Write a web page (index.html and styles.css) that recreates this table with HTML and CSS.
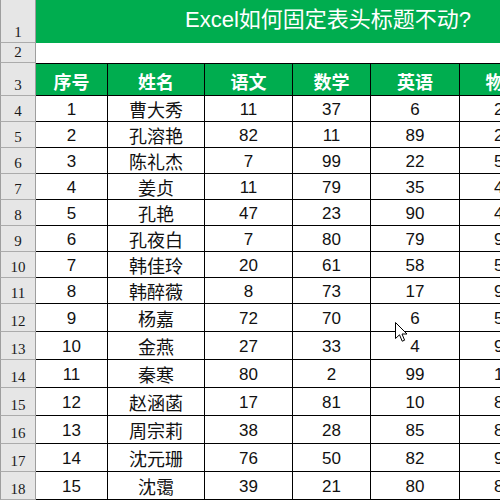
FILE: index.html
```html
<!DOCTYPE html>
<html lang="zh-CN">
<head>
<meta charset="utf-8">
<title>Excel如何固定表头标题不动?</title>
<link rel="stylesheet" href="styles.css">
</head>
<body>
<div class="sheet">
  <div class="rh">1</div>
  <div class="title">Excel如何固定表头标题不动?</div>
  <div class="rh">2</div>
  <div class="blank"></div>

  <div class="rh">3</div>
  <div class="hd">序号</div><div class="hd">姓名</div><div class="hd">语文</div><div class="hd">数学</div><div class="hd">英语</div><div class="hd">物理</div>

  <div class="rh">4</div><div class="c">1</div><div class="c name">曹大秀</div><div class="c">11</div><div class="c">37</div><div class="c">6</div><div class="c">23</div>
  <div class="rh">5</div><div class="c">2</div><div class="c name">孔溶艳</div><div class="c">82</div><div class="c">11</div><div class="c">89</div><div class="c">25</div>
  <div class="rh">6</div><div class="c">3</div><div class="c name">陈礼杰</div><div class="c">7</div><div class="c">99</div><div class="c">22</div><div class="c">56</div>
  <div class="rh">7</div><div class="c">4</div><div class="c name">姜贞</div><div class="c">11</div><div class="c">79</div><div class="c">35</div><div class="c">45</div>
  <div class="rh">8</div><div class="c">5</div><div class="c name">孔艳</div><div class="c">47</div><div class="c">23</div><div class="c">90</div><div class="c">47</div>
  <div class="rh">9</div><div class="c">6</div><div class="c name">孔夜白</div><div class="c">7</div><div class="c">80</div><div class="c">79</div><div class="c">92</div>
  <div class="rh">10</div><div class="c">7</div><div class="c name">韩佳玲</div><div class="c">20</div><div class="c">61</div><div class="c">58</div><div class="c">58</div>
  <div class="rh">11</div><div class="c">8</div><div class="c name">韩醉薇</div><div class="c">8</div><div class="c">73</div><div class="c">17</div><div class="c">91</div>
  <div class="rh">12</div><div class="c">9</div><div class="c name">杨嘉</div><div class="c">72</div><div class="c">70</div><div class="c">6</div><div class="c">55</div>
  <div class="rh">13</div><div class="c">10</div><div class="c name">金燕</div><div class="c">27</div><div class="c">33</div><div class="c">4</div><div class="c">93</div>
  <div class="rh">14</div><div class="c">11</div><div class="c name">秦寒</div><div class="c">80</div><div class="c">2</div><div class="c">99</div><div class="c">17</div>
  <div class="rh">15</div><div class="c">12</div><div class="c name">赵涵菡</div><div class="c">17</div><div class="c">81</div><div class="c">10</div><div class="c">84</div>
  <div class="rh">16</div><div class="c">13</div><div class="c name">周宗莉</div><div class="c">38</div><div class="c">28</div><div class="c">85</div><div class="c">88</div>
  <div class="rh">17</div><div class="c">14</div><div class="c name">沈元珊</div><div class="c">76</div><div class="c">50</div><div class="c">82</div><div class="c">90</div>
  <div class="rh">18</div><div class="c">15</div><div class="c name">沈霭</div><div class="c">39</div><div class="c">21</div><div class="c">80</div><div class="c">86</div>
</div>
<svg class="cursor" width="13" height="21" viewBox="0 0 13 21">
  <path d="M0.5 0.5 L0.5 16.5 L4.5 12.8 L7.2 19.2 L9.6 18.2 L7 12 L12 12 Z" fill="#fff" stroke="#000" stroke-width="1" stroke-linejoin="miter"/>
</svg>
</body>
</html>
```

FILE: styles.css
```css
html, body {
  margin: 0;
  padding: 0;
  background: #fff;
  overflow: hidden;
  width: 500px;
  height: 500px;
}

.sheet {
  display: grid;
  grid-template-columns: 36px 72px 97px 88px 78px 89px 88px;
  grid-template-rows: 43px 20px 33px repeat(8, 26px) repeat(7, 28px);
  width: 548px;
  font-family: "Liberation Sans", "Noto Sans CJK SC", sans-serif;
}

.rh {
  box-sizing: border-box;
  background: #e6e6e6;
  border-left: 1px solid #9e9e9e;
  border-right: 1px solid #9e9e9e;
  border-bottom: 1px solid #ababab;
  display: flex;
  align-items: flex-end;
  justify-content: center;
  padding-bottom: 2px;
  font-family: "Liberation Serif", "DejaVu Serif", serif;
  font-size: 15px;
  line-height: 1;
  color: #1a1a1a;
}

.title {
  grid-column: 2 / -1;
  background: #00ad4f;
  color: #fff;
  font-family: "Liberation Sans", "Noto Sans CJK SC", sans-serif;
  font-size: 22px;
  line-height: 1;
  display: flex;
  align-items: center;
  padding-left: 149px;
  padding-bottom: 4px;
  box-sizing: border-box;
}

.blank {
  grid-column: 2 / -1;
  background: #fff;
}

.hd {
  box-sizing: border-box;
  background: #00ad4f;
  color: #fff;
  border-top: 1px solid #000;
  border-right: 1px solid #000;
  border-bottom: 1px solid #000;
  display: flex;
  align-items: center;
  justify-content: center;
  padding-top: 3px;
  font-family: "Noto Sans CJK SC", sans-serif;
  font-weight: bold;
  font-size: 18px;
  line-height: 1;
  white-space: nowrap;
  overflow: hidden;
}

.c {
  box-sizing: border-box;
  border-right: 1px solid #000;
  border-bottom: 1px solid #000;
  display: flex;
  align-items: center;
  justify-content: center;
  padding-top: 1px;
  font-family: "Liberation Sans", sans-serif;
  font-size: 17px;
  line-height: 1;
  color: #111;
  white-space: nowrap;
}

.name {
  font-family: "Noto Sans CJK SC", sans-serif;
  font-size: 18px;
}

.cursor {
  position: absolute;
  left: 395px;
  top: 322px;
}
```
